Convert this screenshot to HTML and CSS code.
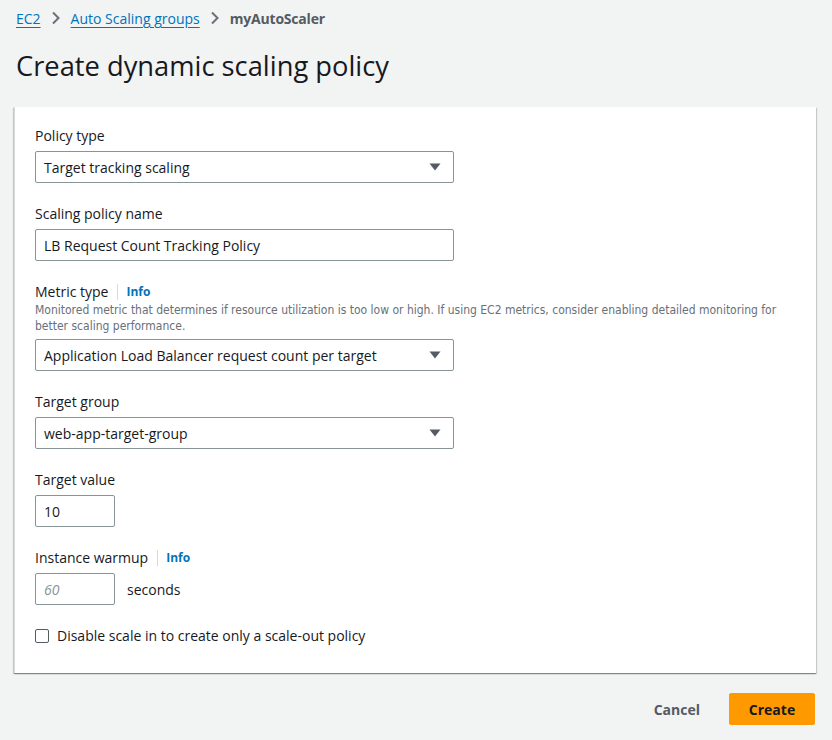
FILE: index.html
```html
<!DOCTYPE html>
<html lang="en">
<head>
<meta charset="utf-8">
<title>Create dynamic scaling policy</title>
<link rel="stylesheet" href="styles.css">
</head>
<body>
<div class="page">
  <nav class="crumbs">
    <a class="crumb-link" href="#">EC2</a>
    <svg class="chev" width="10" height="14" viewBox="0 0 10 14"><path d="M2 1.5 L7.5 7 L2 12.5" fill="none" stroke="#687078" stroke-width="2"/></svg>
    <a class="crumb-link" href="#">Auto Scaling groups</a>
    <svg class="chev" width="10" height="14" viewBox="0 0 10 14"><path d="M2 1.5 L7.5 7 L2 12.5" fill="none" stroke="#687078" stroke-width="2"/></svg>
    <span class="crumb-current">myAutoScaler</span>
  </nav>

  <h1 class="title">Create dynamic scaling policy</h1>

  <section class="panel">
    <div class="field">
      <div class="label">Policy type</div>
      <div class="select"><span>Target tracking scaling</span><svg class="caret" width="12" height="8" viewBox="0 0 12 8"><path d="M0.5 0.5 H11.5 L6 7.5 Z" fill="#545b64"/></svg></div>
    </div>

    <div class="field">
      <div class="label">Scaling policy name</div>
      <div class="input wide">LB Request Count Tracking Policy</div>
    </div>

    <div class="field">
      <div class="label">Metric type <span class="sep"></span><a class="info" href="#">Info</a></div>
      <div class="desc">Monitored metric that determines if resource utilization is too low or high. If using EC2 metrics, consider enabling detailed monitoring for better scaling performance.</div>
      <div class="select"><span>Application Load Balancer request count per target</span><svg class="caret" width="12" height="8" viewBox="0 0 12 8"><path d="M0.5 0.5 H11.5 L6 7.5 Z" fill="#545b64"/></svg></div>
    </div>

    <div class="field">
      <div class="label">Target group</div>
      <div class="select"><span>web-app-target-group</span><svg class="caret" width="12" height="8" viewBox="0 0 12 8"><path d="M0.5 0.5 H11.5 L6 7.5 Z" fill="#545b64"/></svg></div>
    </div>

    <div class="field">
      <div class="label">Target value</div>
      <div class="input small">10</div>
    </div>

    <div class="field">
      <div class="label">Instance warmup <span class="sep"></span><a class="info" href="#">Info</a></div>
      <div class="row">
        <div class="input small placeholder">60</div>
        <span class="unit">seconds</span>
      </div>
    </div>

    <label class="check">
      <span class="box"></span>
      <span>Disable scale in to create only a scale-out policy</span>
    </label>
  </section>

  <div class="actions">
    <button class="btn-link">Cancel</button>
    <button class="btn-primary">Create</button>
  </div>
</div>
</body>
</html>
```

FILE: styles.css
```css
* { box-sizing: border-box; }
html, body { margin: 0; padding: 0; }
body {
  background: #f2f3f3;
  font-family: "Open Sans", "Noto Sans", sans-serif;
  color: #16191f;
  font-size: 14px;
}
.page {
  padding: 8px 16px 0 16px;
}
.crumbs {
  display: flex;
  align-items: center;
  height: 20px;
  font-size: 14px;
  gap: 10px;
}
.crumb-link {
  color: #0073bb;
  text-decoration: underline;
  text-underline-offset: 3px;
}
.chev { display: block; }
.crumb-current {
  color: #545b64;
  font-weight: 700;
  letter-spacing: -0.2px;
}
.title {
  margin: 20px 0 0 0;
  font-size: 27.3px;
  font-weight: 400;
  line-height: 36px;
  color: #16191f;
}
.panel {
  margin-top: 23px;
  margin-left: -2px;
  width: 802px;
  background: #fff;
  border-left: 1px solid #d5dbdb;
  box-shadow: 0 1px 1px 0 rgba(0, 28, 36, 0.3), 1px 1px 1px 0 rgba(0, 28, 36, 0.15), -1px 1px 1px 0 rgba(0, 28, 36, 0.15);
  padding: 18px 20px 26px 20px;
}
.field { margin-bottom: 20px; }
.label {
  display: flex;
  align-items: center;
  line-height: 22px;
  font-size: 14px;
  margin-bottom: 4px;
}
.sep {
  display: inline-block;
  width: 1px;
  height: 16px;
  background: #d5dbdb;
  margin: 0 8px 0 9px;
}
.info {
  color: #0073bb;
  font-weight: 700;
  font-size: 12px;
  text-decoration: none;
}
.desc {
  font-family: "DejaVu Sans Condensed", "Liberation Sans Narrow", sans-serif;
  font-stretch: condensed;
  font-size: 12px;
  line-height: 16px;
  color: #687078;
  margin-top: -5px;
  margin-bottom: 5px;
}
.select, .input {
  height: 32px;
  border: 1px solid #879596;
  border-radius: 2px;
  display: flex;
  align-items: center;
  padding: 0 12px 0 8px;
  font-size: 14px;
  color: #16191f;
  background: #fff;
}
.select, .input.wide { width: 419px; }
.select { justify-content: space-between; }
.input.small { width: 80px; }
.placeholder { color: #879596; font-style: italic; }
.row {
  display: flex;
  align-items: center;
  gap: 12px;
}
.unit { font-size: 14px; }
.check {
  display: flex;
  align-items: center;
  gap: 8px;
  line-height: 22px;
  margin-top: 2px;
}
.box {
  width: 14px;
  height: 14px;
  border: 1px solid #545b64;
  border-radius: 2px;
  background: #fff;
}
.actions {
  display: flex;
  justify-content: flex-end;
  align-items: center;
  gap: 9px;
  margin-top: 20px;
  width: 799px;
}
.btn-link {
  background: none;
  border: none;
  font-family: inherit;
  font-weight: 700;
  font-size: 14px;
  color: #545b64;
  padding: 4px 20px;
}
.btn-primary {
  background: #ff9900;
  border: 1px solid #ff9900;
  border-radius: 2px;
  font-family: inherit;
  font-weight: 700;
  font-size: 14px;
  color: #16191f;
  width: 86px;
  height: 32px;
}
```
